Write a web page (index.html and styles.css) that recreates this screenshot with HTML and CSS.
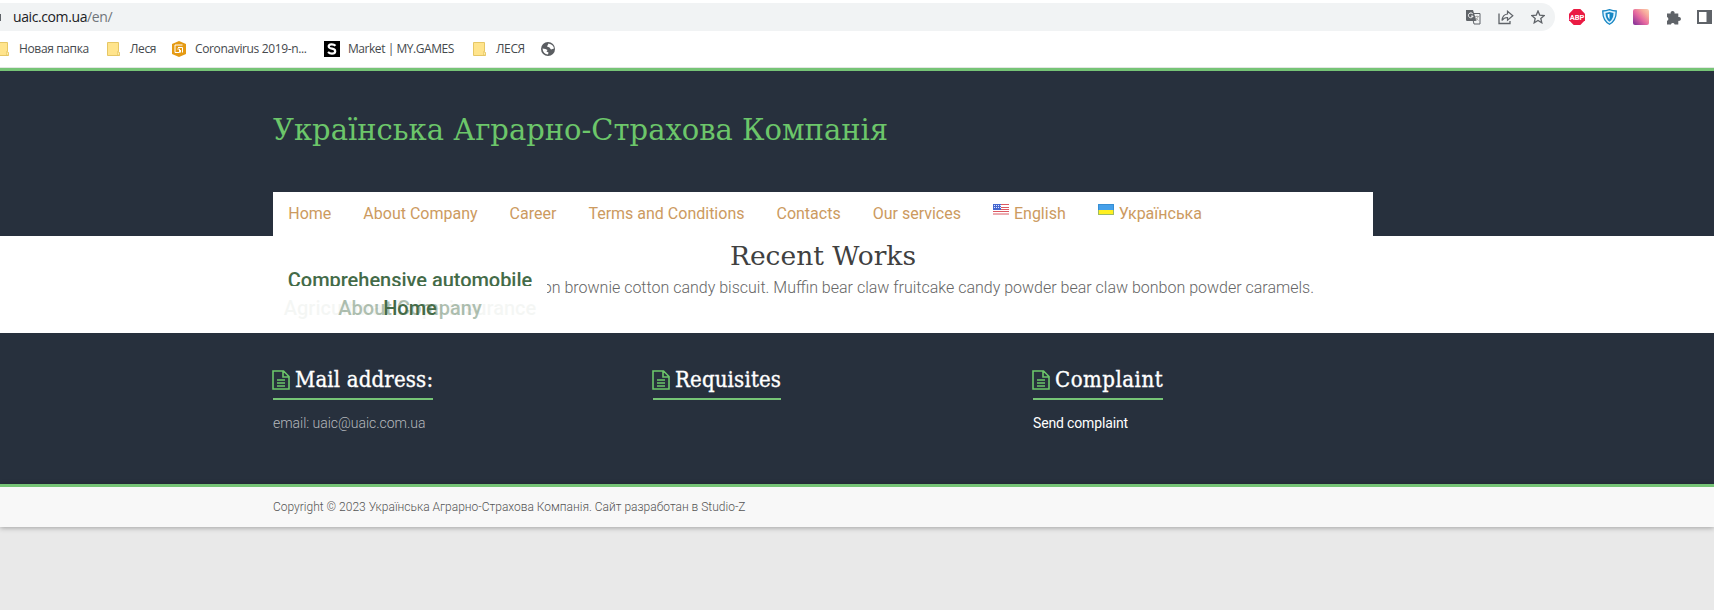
FILE: index.html
```html
<!DOCTYPE html>
<html lang="en">
<head>
<meta charset="utf-8">
<title>Українська Аграрно-Страхова Компанія</title>
<link rel="stylesheet" href="styles.css">
</head>
<body>
<svg class="defs" width="0" height="0">
  <symbol id="folder" viewBox="0 0 13 14"><path d="M.5.5h11v9l1 1v3H.5z" fill="#ffe48c" stroke="#e6c765"/><path d="M10.5 13V9.5l2 1.5v2z" fill="#fff0b0" stroke="#e6c765" stroke-width=".7"/></symbol>
  <symbol id="doc" viewBox="0 0 18 20"><path d="M1 1h10.500L17 6.500V19H1zM11 1v6h6M5 10h8M5 13h8M5 16h8" fill="none" stroke="#6cc66a" stroke-width="1.600"/></symbol>
</svg>
<div class="chrome">
  <div class="toolbar">
    <div class="address"><i class="lock"></i><span class="url">uaic.com.ua<span class="path">/en/</span></span>
      <div class="tools">
        <svg width="15" height="15" viewBox="0 0 15 15"><path d="M5.500 3.500h8.500v10.500H8z" fill="#f1f3f4" stroke="#5f6368"/><path d="M0 0h7l3.500 11H1.200Q0 11 0 10z" fill="#5f6368"/><path d="M9 6.500h4M11 5.500v1M12.200 6.500Q11.500 9 9.600 10M9.800 8l2.700 2.500" fill="none" stroke="#aaa"/><path d="M6.800 4a2.400 2.400 0 1 0 .3 2.100H5" fill="none" stroke="#fff"/></svg>
        <svg width="16" height="15" viewBox="0 0 16 15"><path d="M1 3.500V13.500H12V11" fill="none" stroke="#5f6368" stroke-width="1.300"/><path d="M9.500 1.200 14.800 5.700 9.500 10.200V7.500Q6 7.400 4 10.500 4.500 4.500 9.500 4z" fill="none" stroke="#5f6368" stroke-width="1.200"/></svg>
        <svg width="14" height="14" viewBox="0 0 14 14"><path d="m7 1 1.700 4.100 4.500.4-3.400 2.900 1 4.400L7 10.500l-3.800 2.300 1-4.400L.8 5.500l4.500-.4z" fill="none" stroke="#5f6368" stroke-width="1.300"/></svg>
      </div>
    </div>
    <div class="extensions">
      <svg width="16" height="16" viewBox="0 0 16 16"><path d="M4.700 0h6.600L16 4.700v6.600L11.300 16H4.700L0 11.300V4.700z" fill="#ea1b43"/><text x="8" y="11" text-anchor="middle" class="abp">ABP</text></svg>
      <svg width="15" height="16" viewBox="0 0 15 16"><path d="M.8 2Q4 2 7.500.7 11 2 14.200 2q.3 9.500-6.700 13.300Q.5 11.500.8 2z" fill="#dff3ff" stroke="#1787c4" stroke-width="1.300"/><path d="M3.500 4Q6 3.700 7.500 3 9 3.700 11.500 4q0 6-4 8.800Q3.500 10 3.500 4z" fill="#1787c4"/><path d="M5.500 5.200 7.500 4.700V10.500Q5.500 9 5.500 5.200z" fill="#fff"/></svg>
      <i class="swatch"></i>
      <svg width="15" height="15" viewBox="0 0 15 15"><path d="M1 3.500h3.700a2 2 0 1 1 3.800 0h3.800V7a2 2 0 1 1 0 3.800v3.700H8.700a2 2 0 0 0-3.800 0H1v-3.700a2 2 0 0 0 0-3.800z" fill="#5f6368"/></svg>
      <svg width="15" height="14" viewBox="0 0 15 14"><path d="M1 1h13v12H1z" fill="#fff" stroke="#5f6368" stroke-width="2"/><path d="M9.500 0H15v14H9.500z" fill="#5f6368"/></svg>
    </div>
  </div>
  <div class="bookmarks">
    <span class="bm b1"><svg width="13" height="14"><use href="#folder"/></svg><span>Новая папка</span></span>
    <span class="bm b2"><svg width="13" height="14"><use href="#folder"/></svg><span>Леся</span></span>
    <span class="bm b3"><svg width="14" height="16" viewBox="0 0 14 16"><path d="m7 0 7 3v10l-7 3-7-3V3z" fill="#e59a13"/><path d="M10.500 4H3v7.500h4.500V8H5.300M8.500 11.500V9M10.500 11.500V6.500H6" fill="none" stroke="#fff" stroke-width="1"/></svg><span>Coronavirus 2019-n...</span></span>
    <span class="bm b4"><svg width="16" height="16" viewBox="0 0 16 16"><path d="M0 0h16v16H0z"/><path d="M11.500 4.700Q10 3.200 7.500 3.300 4.600 3.500 4.700 5.500 4.900 7.300 8 7.700q3.200.5 3.200 2.600Q11 12.600 8 12.600 5.600 12.600 4 11" fill="none" stroke="#fff" stroke-width="2.200"/></svg><span>Market | MY.GAMES</span></span>
    <span class="bm b5"><svg width="13" height="14"><use href="#folder"/></svg><span>ЛЕСЯ</span></span>
    <span class="bm b6"><svg width="14" height="14" viewBox="0 0 14 14"><circle cx="7" cy="7" r="7" fill="#5a5d61"/><path d="M7.500 1.500 6 4.500l2.500 1L10 7.500l3-1Q12.500 2.500 7.500 1.500zM1.500 6.500Q5 6.500 6.500 8l-1 1.500 2 1-.5 2Q2 12 1.500 6.500z" fill="#fff"/></svg></span>
  </div>
</div>
<header class="header">
  <div class="container">
    <h1>Українська Аграрно-Страхова Компанія</h1>
    <nav>
      <a>Home</a><a>About Company</a><a>Career</a><a>Terms and Conditions</a><a>Contacts</a><a>Our services</a>
      <a><svg class="flag" width="16" height="11" viewBox="0 0 16 11"><path d="M0 0h16v11H0z" fill="#fff"/><path d="M0 .5h16M0 3.500h16M0 5.500h16M0 7.500h16M0 10h16" stroke="#dc5962"/><path d="M0 0h8v6H0z" fill="#4567cf"/><path d="M1 1.500h7M1 3.500h7" stroke="#dfe5ff" stroke-dasharray="1 1"/></svg>English</a>
      <a><svg class="flag" width="16" height="11" viewBox="0 0 16 11"><path d="M0 0h16v6H0z" fill="#45a0ea"/><path d="M0 6h16v5H0z" fill="#fff020"/><path d="M.5.5h15v10H.5z" fill="none" stroke="#2478b8" stroke-opacity=".45"/></svg>Українська</a>
    </nav>
  </div>
</header>
<main class="container">
  <h2>Recent Works</h2>
  <p>Toffee bonbon muffin gummi bonbon brownie cotton candy biscuit. Muffin bear claw fruitcake candy powder bear claw bonbon powder caramels.</p>
  <div class="carousel">
    <div class="slide lead">Comprehensive automobile</div>
    <div class="slides">
      <div class="slide ghost">Agricultural Culpa insurance</div>
      <div class="slide fading">About Company</div>
      <div class="slide current">Home</div>
    </div>
  </div>
</main>
<footer>
  <div class="widgets"><div class="container columns">
    <section><h3><svg width="18" height="20"><use href="#doc"/></svg><span>Mail address:</span></h3><p>email: uaic@uaic.com.ua</p></section>
    <section><h3><svg width="18" height="20"><use href="#doc"/></svg><span>Requisites</span></h3></section>
    <section><h3><svg width="18" height="20"><use href="#doc"/></svg><span class="wide">Complaint</span></h3><p><a>Send complaint</a></p></section>
  </div></div>
  <div class="copyright"><div class="container">Copyright © 2023 Українська Аграрно-Страхова Компанія. Сайт разработан в Studio-Z</div></div>
</footer>
</body>
</html>
```
FILE: styles.css
```css
* { box-sizing: border-box; }
body { margin: 0; height: 610px; overflow: hidden; background: #e9e9e9; font-family: Roboto, sans-serif; }
svg { display: block; flex: none; }
.defs { position: absolute; }
.container { width: 1100px; margin-left: 273px; }
.chrome { height: 68px; background: #fff; padding-top: 3px; font-family: "Open Sans", sans-serif; border-bottom: 1px solid #e3e6e3; }
.toolbar { display: flex; height: 28px; }
.address { width: 1555px; background: #f1f3f4; border-radius: 0 14px 14px 0; display: flex; align-items: center; }
.lock { width: 1px; height: 7px; background: #5f6368; margin-right: 12px; }
.url { font-size: 14px; line-height: 28px; letter-spacing: -.4px; color: #202124; white-space: nowrap; }
.path { color: #70757a; }
.tools { margin-left: auto; margin-right: 10px; display: flex; gap: 17px; align-items: center; }
.extensions { display: flex; align-items: center; gap: 16.600px; margin-left: 14px; }
.abp { font: 700 7.500px Roboto, sans-serif; fill: #fff; }
.swatch { width: 16px; height: 16px; border-radius: 2px; background: linear-gradient(45deg, #7b2c98, #e668a0 45%, #f7a99c 75%, #fbd0b0); }
.bookmarks { display: flex; height: 35px; align-items: center; font-size: 12px; color: #45494d; white-space: nowrap; }
.bm { display: flex; align-items: center; gap: 10px; flex: none; }
.b1 { width: 111px; margin-left: -4px; }
.b2 { width: 65px; }
.b3 { width: 152px; gap: 9px; }
.b4 { width: 149px; gap: 8px; }
.b5 { width: 68px; }
.bm span { letter-spacing: -.36px; }
.b4 span { letter-spacing: -.45px; }
.header { height: 168px; border-top: 3px solid #76c476; background: #27303d; }
h1, h2, h3 { margin: 0; font-family: "Roboto Slab", "DejaVu Serif", serif; font-weight: 400; white-space: nowrap; }
h1 { height: 121px; font-size: 29px; line-height: 118px; color: #6cc66a; }
nav { display: flex; height: 45px; padding-right: 1px; background: #fff; border-bottom: 1px solid #ebebeb; }
nav a { display: flex; padding: 0 16px; font-size: 16px; line-height: 43px; color: #cc9a60; white-space: nowrap; }
nav a:first-child { padding-left: 15.300px; }
.flag { margin: 12px 5px 0 0; }
main { height: 97px; background: #fff; box-shadow: -273px 0 #fff, 341px 0 #fff; }
main.container { position: relative; }
h2 { font-size: 26.500px; line-height: 39px; height: 41px; text-align: center; color: #404040; }
main p { margin: 0; padding-right: 59px; font-size: 16px; line-height: 22px; font-weight: 300; text-align: right; color: #666; white-space: nowrap; }
.carousel { position: absolute; left: 0; top: 25px; width: 274px; height: 68px; background: #fff; }
.slide { font-size: 20px; font-weight: 500; line-height: 24px; color: #446b48; text-align: center; white-space: nowrap; }
.lead { height: 25px; padding-top: 7px; letter-spacing: -.03px; overflow: hidden; }
.slides { display: grid; margin-top: 10px; }
.slides .slide { grid-area: 1 / 1; }
.ghost { opacity: .05; }
.fading { opacity: .42; }
.widgets { height: 151px; background: #27303d; padding-top: 31px; }
.columns { display: grid; grid-template-columns: 380px 380px 340px; }
h3 { display: inline-flex; align-items: center; gap: 5px; height: 36px; padding-bottom: 3px; border-bottom: 2px solid #76c476; color: #fff; font-family: "Roboto Slab", "DejaVu Serif Condensed", "DejaVu Serif", serif; font-stretch: condensed; font-size: 22px; line-height: 29px; letter-spacing: .15px; -webkit-text-stroke: .35px #fff; }
h3 svg { margin-left: -1px; }
h3 .wide { letter-spacing: .5px; }
.columns p { margin: 14px 0 0; font-size: 14px; line-height: 18px; font-weight: 300; letter-spacing: -.03px; color: #b5b8bc; }
.columns a { color: #fff; font-weight: 400; letter-spacing: -.15px; }
.copyright { height: 43px; border-top: 3px solid #76c476; background: #f8f8f8; box-shadow: 0 1px 5px rgba(0,0,0,.3); font-size: 12px; line-height: 41px; font-weight: 300; color: #555; }
```
